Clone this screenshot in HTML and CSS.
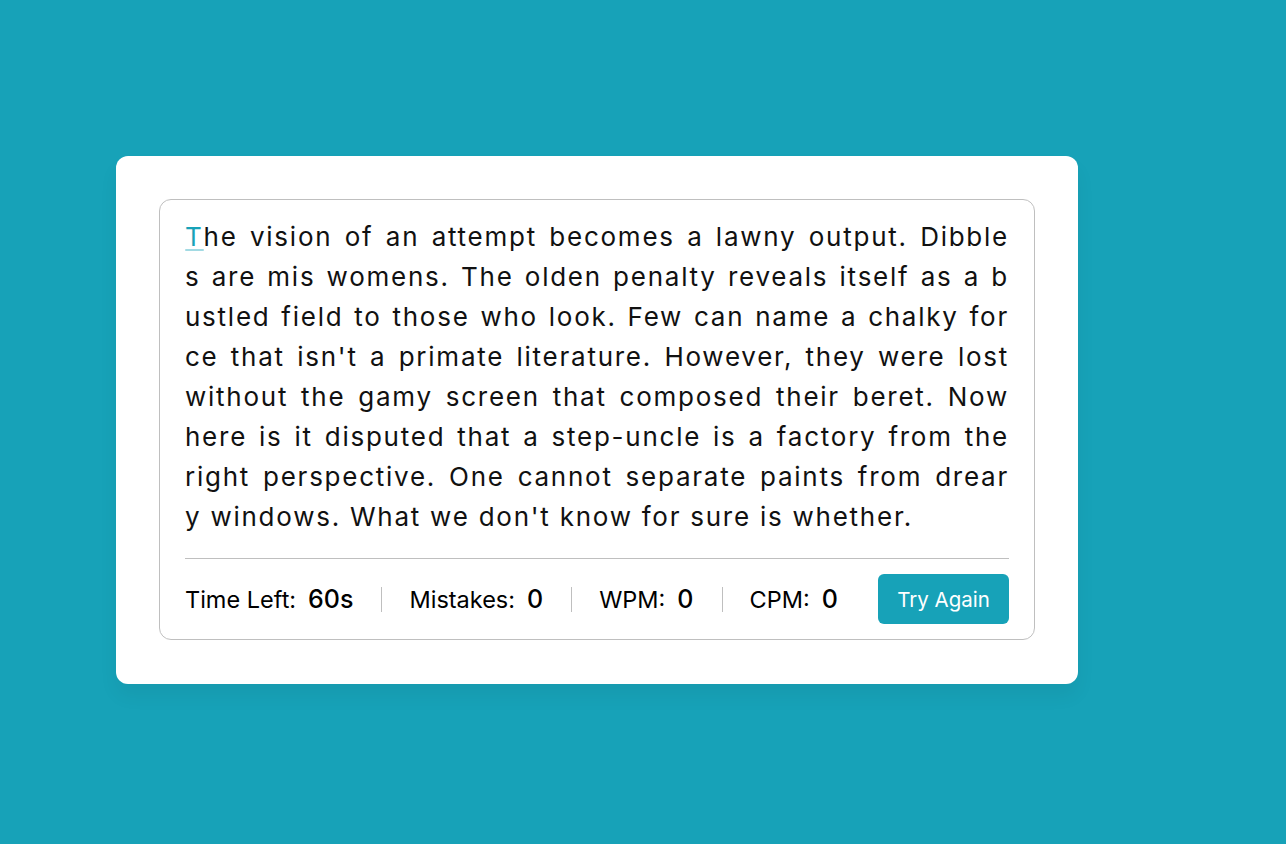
FILE: index.html
```html
<!DOCTYPE html>
<html lang="en">
<head>
<meta charset="utf-8">
<title>Typing Speed Test</title>
<link rel="stylesheet" href="styles.css">
</head>
<body>
<div class="wrapper">
  <div class="content-box">
    <div class="typing-text">
      <p>
        <span class="line"><span class="active">T</span>he vision of an attempt becomes a lawny output. Dibble</span>
        <span class="line">s are mis womens. The olden penalty reveals itself as a b</span>
        <span class="line">ustled field to those who look. Few can name a chalky for</span>
        <span class="line">ce that isn't a primate literature. However, they were lost</span>
        <span class="line">without the gamy screen that composed their beret. Now</span>
        <span class="line">here is it disputed that a step-uncle is a factory from the</span>
        <span class="line">right perspective. One cannot separate paints from drear</span>
        <span class="line last">y windows. What we don't know for sure is whether.</span>
      </p>
    </div>
    <div class="content">
      <ul class="result-details">
        <li><p>Time Left:</p><span><b>60</b>s</span></li>
        <li><p>Mistakes:</p><span>0</span></li>
        <li><p>WPM:</p><span>0</span></li>
        <li><p>CPM:</p><span>0</span></li>
      </ul>
      <button class="btn">Try Again</button>
    </div>
  </div>
</div>
</body>
</html>
```

FILE: styles.css
```css
* {
  margin: 0;
  padding: 0;
  box-sizing: border-box;
}

body {
  font-family: "Inter", "Noto Sans", sans-serif;
  background: #17A2B8;
  min-height: 100vh;
  display: flex;
  align-items: center;
  padding: 0 0 4px 116px;
  color: #000;
}

.wrapper {
  width: 962px;
  padding: 43px 43px 44px;
  background: #fff;
  border-radius: 12px;
  box-shadow: 0 12px 19px rgba(0, 0, 0, 0.05);
}

.content-box {
  padding: 17px 25px 0;
  border: 1px solid #bfbfbf;
  border-radius: 12px;
}

.typing-text {
  height: 320px;
  overflow: hidden;
}

.typing-text p {
  font-size: 26px;
  line-height: 40px;
  letter-spacing: 1.75px;
  color: #111;
}

.typing-text .line {
  display: block;
  white-space: nowrap;
  text-align: justify;
  text-align-last: justify;
}

.typing-text .line.last {
  text-align-last: left;
}

.typing-text .active {
  position: relative;
  color: #17A2B8;
}

.typing-text .active::before {
  content: "";
  position: absolute;
  left: 0;
  bottom: 1px;
  width: 100%;
  height: 2px;
  border-radius: 5px;
  background: #17A2B8;
  opacity: 0.4;
}

.content {
  margin-top: 21px;
  padding: 15px 0;
  border-top: 1px solid #bfbfbf;
  display: flex;
  align-items: center;
  justify-content: space-between;
}

.result-details {
  list-style: none;
  display: flex;
  align-items: center;
  gap: 28px;
}

.result-details li {
  display: flex;
  align-items: center;
  height: 25px;
}

.result-details li + li {
  padding-left: 27px;
  border-left: 1px solid #bfbfbf;
}

.result-details li p {
  font-size: 23.5px;
}

.result-details li span {
  font-size: 25px;
  font-weight: 500;
  margin-left: 12px;
}

.result-details li b {
  font-weight: 500;
}

.btn {
  width: 131px;
  height: 50px;
  border: none;
  border-radius: 6px;
  background: #17A2B8;
  color: #fff;
  font-family: inherit;
  font-size: 20.5px;
}
```
